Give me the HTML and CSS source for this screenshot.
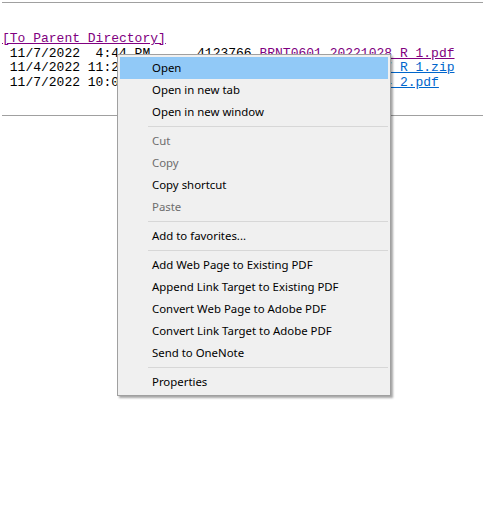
FILE: index.html
```html
<!DOCTYPE html>
<html lang="en">
<head>
  <meta charset="UTF-8" />
  <title>files.example.local - /scans/BRNT0601/</title>
  <link rel="stylesheet" href="styles.css">
</head>
<body>

  <hr class="regua">
  <pre class="lista-arquivos"><a class="visitado" href="#">[To Parent Directory]</a>
 11/7/2022  4:44 PM      4123766 <a class="visitado" href="#">BRNT0601_20221028_R_1.pdf</a>
 11/4/2022 11:23 AM      2210388 <a href="#">BRNT0601_20221027_R_1.zip</a>
 11/7/2022 10:02 AM       987512 <a href="#">BRNT0601_20221104_2.pdf</a>
</pre>
  <hr class="regua">

  <ul class="menu-contexto">
    <li class="item ativo">Open</li>
    <li class="item">Open in new tab</li>
    <li class="item">Open in new window</li>
    <li class="separador"></li>
    <li class="item desativado">Cut</li>
    <li class="item desativado">Copy</li>
    <li class="item">Copy shortcut</li>
    <li class="item desativado">Paste</li>
    <li class="separador"></li>
    <li class="item">Add to favorites...</li>
    <li class="separador"></li>
    <li class="item">Add Web Page to Existing PDF</li>
    <li class="item">Append Link Target to Existing PDF</li>
    <li class="item">Convert Web Page to Adobe PDF</li>
    <li class="item">Convert Link Target to Adobe PDF</li>
    <li class="item">Send to OneNote</li>
    <li class="separador"></li>
    <li class="item">Properties</li>
  </ul>

</body>
</html>
```

FILE: styles.css
```css
body {
  margin: 0;
  padding: 2px 0 0 2px;
  background: #fff;
  color: #000;
}
.regua {
  margin: 0;
  height: 0;
  border: none;
  border-top: 1px solid #a0a0a0;
}
.lista-arquivos {
  font-family: "Liberation Mono", "Courier New", monospace;
  font-size: 13px;
  line-height: 14.67px;
  margin: 29px 0 24px 0;
}
.lista-arquivos a {
  color: #0066cc;
  text-decoration: underline;
}
.lista-arquivos a.visitado {
  color: #800080;
}
.menu-contexto {
  position: absolute;
  left: 117px;
  top: 54px;
  width: 268px;
  margin: 0;
  padding: 2px;
  list-style: none;
  background: #f0f0f0;
  border: 1px solid #a0a0a0;
  box-shadow: 2px 2px 2px rgba(0, 0, 0, 0.35);
  font-family: "Segoe UI", "Noto Sans", sans-serif;
  font-size: 11.4px;
}
.item {
  height: 22px;
  line-height: 22px;
  padding-left: 32px;
  white-space: nowrap;
}
.item.ativo {
  background: #91c9f7;
}
.item.desativado {
  color: #6d6d6d;
}
.separador {
  height: 1px;
  margin: 3px 0 3px 28px;
  background: #d7d7d7;
}
```
